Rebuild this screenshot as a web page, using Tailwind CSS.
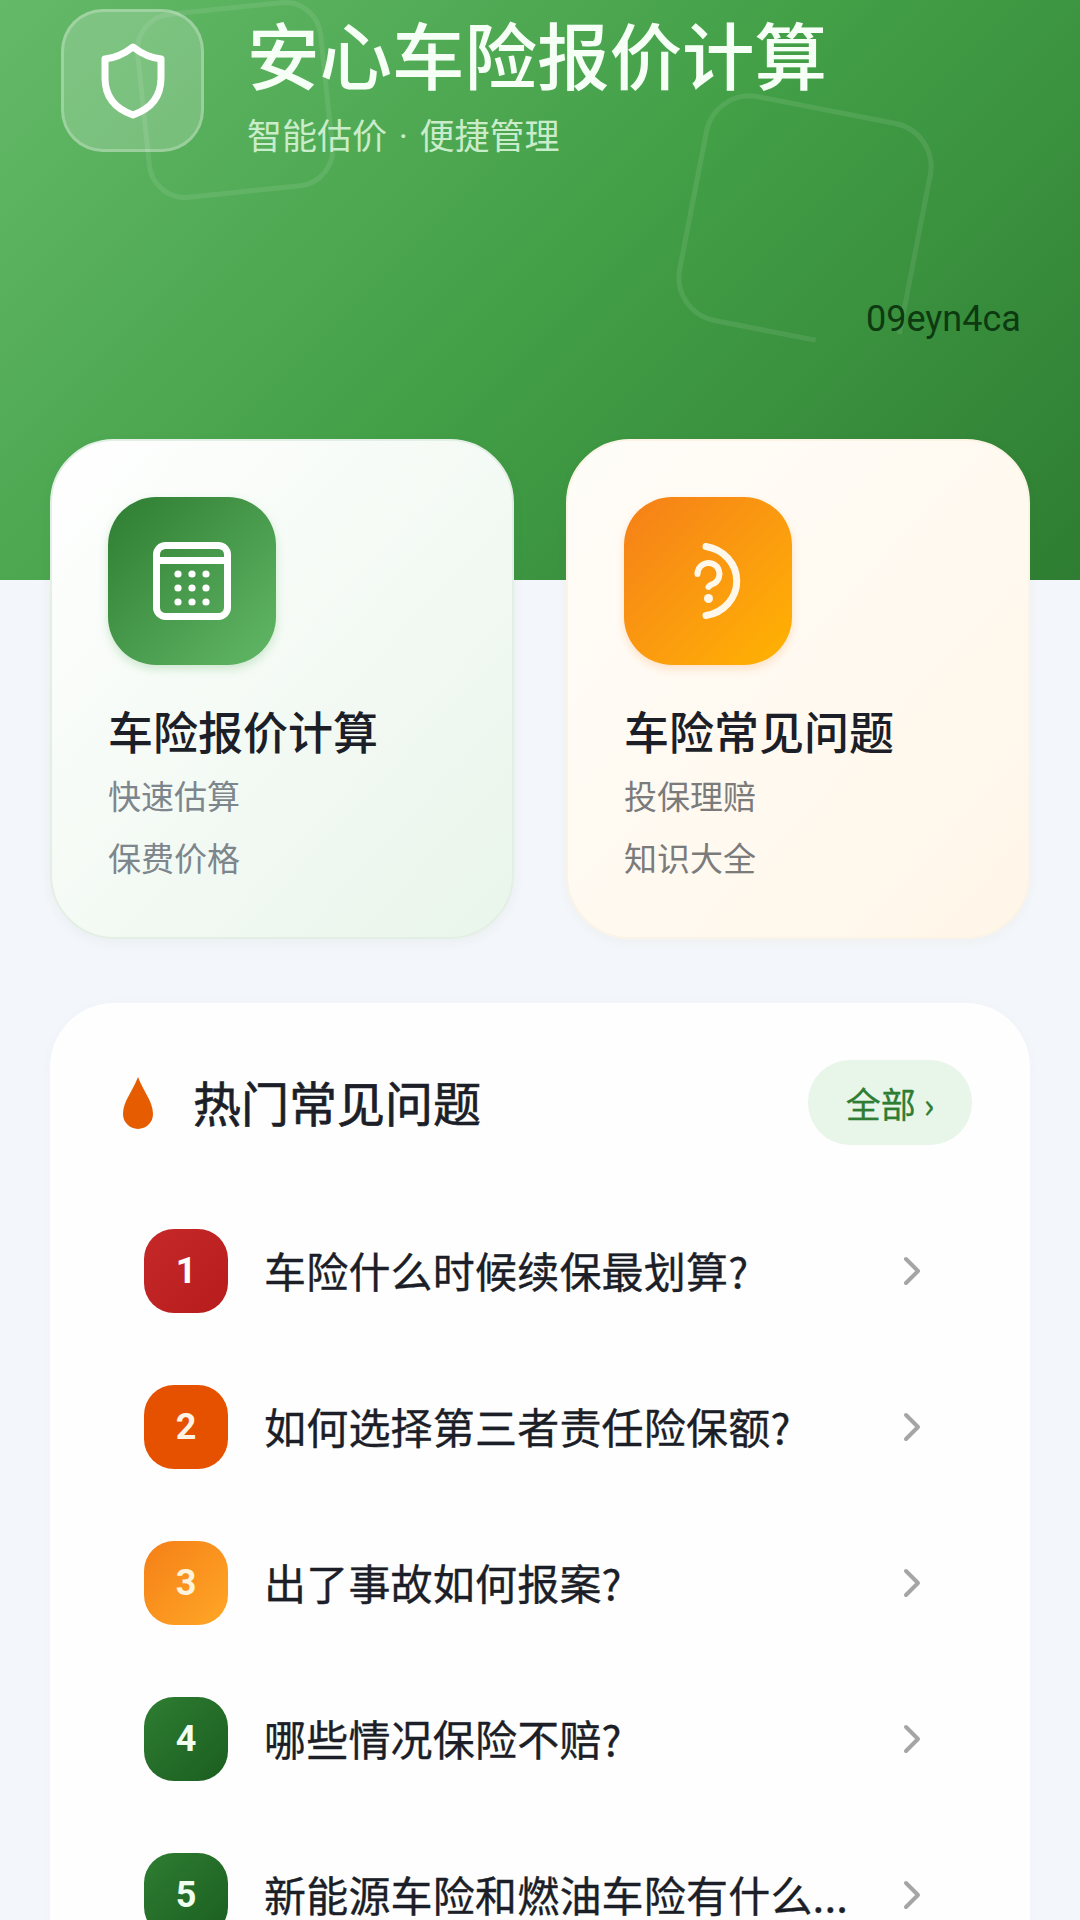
<!DOCTYPE html>
<html lang="zh-CN">
<head>
<meta charset="utf-8">
<script src="https://cdn.jsdelivr.net/npm/@tailwindcss/browser@4"></script>
</head>
<body class="m-0">
<div class="relative w-[1080px] h-[1920px] overflow-hidden bg-[#f3f6fa] font-['Noto_Sans_CJK_SC',sans-serif]">
  <header class="relative h-[580px] bg-[linear-gradient(135deg,#64b968_0%,#43a047_50%,#2e7d32_100%)]">
    <svg class="absolute inset-0 w-[1080px] h-[580px]" viewBox="0 0 1080 580" fill="none" stroke="#ffffff" stroke-opacity="0.09" stroke-width="5">
      <g transform="translate(805 222) rotate(11)"><path d="M33 114H-70A44 44 0 0 1-114 70V-70A44 44 0 0 1-70-114H70A44 44 0 0 1 114-70V92"/></g>
      <g transform="translate(235 100) rotate(-6)"><rect x="-92" y="-92" width="184" height="184" rx="36"/></g>
    </svg>
    <div class="relative flex items-start pl-[61px] pt-[9px] gap-[43px]">
      <div class="w-[143px] h-[143px] shrink-0 rounded-[42px] border-[3px] border-white/25 bg-white/20 flex items-center justify-center">
        <svg class="w-[70px] h-[82px]" viewBox="0 0 70 82" fill="none" stroke="#ffffff" stroke-width="7" stroke-linejoin="round"><path d="M35 7C44 14 53 18 63 19V38C63 57 52 69 35 75C18 69 7 57 7 38V19C17 18 26 14 35 7Z"/></svg>
      </div>
      <div class="flex flex-col">
        <h1 class="text-[72.5px] leading-[96px] -mt-[4px] font-medium text-[#f6fff6] whitespace-nowrap">安心车险报价计算</h1>
        <p class="text-[35px] leading-[48px] mt-[9px] text-[#c9ecca] whitespace-nowrap">智能估价<span class="font-['Roboto',sans-serif] whitespace-pre px-[3px]"> · </span>便捷管理</p>
      </div>
    </div>
    <span class="absolute left-[866px] top-[297px] text-[36px] leading-[44px] text-[#0d3a10] font-['Roboto',sans-serif]">09eyn4ca</span>
  </header>

  <div class="relative grid grid-cols-2 gap-[52px] mx-[50px] -mt-[141px]">
    <section class="h-[500px] rounded-[64px] border-2 border-[#e3efe4] bg-gradient-to-br from-[#ffffff] to-[#e9f5ea] pl-[56px] pt-[56px] shadow-[0_3px_12px_rgba(60,90,70,0.05)]">
      <div class="w-[168px] h-[168px] rounded-[48px] bg-gradient-to-br from-[#2e7d32] to-[#62b866] flex items-center justify-center shadow-[0_4px_10px_rgba(76,175,80,0.25)]">
        <svg class="w-[78px] h-[78px]" viewBox="0 0 78 78" fill="none">
          <rect x="3.5" y="3.5" width="71" height="71" rx="9" stroke="#ffffff" stroke-width="7"/>
          <path d="M4 18.5H74" stroke="#ffffff" stroke-width="7"/>
          <g fill="#ffffff"><circle cx="25" cy="32" r="3.600"/><circle cx="39" cy="32" r="3.600"/><circle cx="53" cy="32" r="3.600"/><circle cx="25" cy="46" r="3.600"/><circle cx="39" cy="46" r="3.600"/><circle cx="53" cy="46" r="3.600"/><circle cx="25" cy="60" r="3.600"/><circle cx="39" cy="60" r="3.600"/><circle cx="53" cy="60" r="3.600"/></g>
        </svg>
      </div>
      <h2 class="mt-[36px] text-[45px] leading-[60px] font-medium text-[#1c1f28]">车险报价计算</h2>
      <p class="mt-[3px] text-[33px] leading-[62px] text-[#7d868c]">快速估算</p>
      <p class="text-[33px] leading-[62px] text-[#7d868c]">保费价格</p>
    </section>
    <section class="h-[500px] rounded-[64px] border-2 border-[#fbf3e5] bg-gradient-to-br from-[#fffdf9] to-[#fff6e8] pl-[56px] pt-[56px] shadow-[0_3px_12px_rgba(120,90,40,0.04)]">
      <div class="w-[168px] h-[168px] rounded-[48px] bg-gradient-to-br from-[#f57f17] to-[#ffb300] flex items-center justify-center shadow-[0_4px_10px_rgba(245,127,23,0.2)]">
        <svg class="w-[168px] h-[168px]" viewBox="0 0 168 168" fill="none" stroke="#fff8ea" stroke-linecap="round">
          <path d="M82 49.500A37 35 0 0 1 82 118.500" stroke-width="7"/>
          <path d="M73.500 77A11 11 0 1 1 90 86.500Q85 88.500 84.500 90" stroke-width="6"/>
          <circle cx="84.500" cy="101.500" r="4.500" fill="#fff8ea" stroke="none"/>
        </svg>
      </div>
      <h2 class="mt-[36px] text-[45px] leading-[60px] font-medium text-[#1c1f28]">车险常见问题</h2>
      <p class="mt-[3px] text-[33px] leading-[62px] text-[#7b7b7b]">投保理赔</p>
      <p class="text-[33px] leading-[62px] text-[#7b7b7b]">知识大全</p>
    </section>
  </div>

  <section class="mt-[64px] mx-[50px] h-[1000px] rounded-t-[64px] bg-[#fefefe] shadow-[0_2px_12px_rgba(80,100,130,0.03)] pt-[57px]">
    <div class="flex items-center justify-between pl-[73px] pr-[58px] h-[85px]">
      <div class="flex items-center gap-[40px]">
        <svg class="w-[30px] h-[52px]" viewBox="0 0 30 52"><path fill="#e65c00" d="M15 0C20 14 30 24 30 37A15 15 0 0 1 0 37C0 24 10 14 15 0Z"/></svg>
        <h2 class="text-[48px] leading-[60px] pb-[4px] text-[#1c1f28] [-webkit-text-stroke:0.7px_#1c1f28]">热门常见问题</h2>
      </div>
      <button class="w-[164px] h-[85px] rounded-[42px] bg-[#e8f5e9] text-[35px] leading-[48px] text-[#2e7d32] [-webkit-text-stroke:0.3px_#2e7d32] flex items-center justify-center gap-[8px]"><span>全部</span><span>›</span></button>
    </div>
    <ul class="mt-[84px] flex flex-col gap-[72px] pl-[94px] pr-[109px]">
      <li class="flex items-center h-[84px] gap-[36px]">
        <span class="w-[84px] h-[84px] shrink-0 rounded-[30px] bg-gradient-to-br from-[#c62828] to-[#b71c1c] text-white text-[36px] leading-none font-bold font-['Roboto',sans-serif] flex items-center justify-center">1</span>
        <span class="flex-1 text-[42px] tracking-[0.2px] leading-[48px] pb-[2px] text-[#1c1f28] [-webkit-text-stroke:0.35px_#1c1f28] whitespace-nowrap">车险什么时候续保最划算?</span>
        <svg class="w-[18px] h-[30px]" viewBox="0 0 18 30" fill="none" stroke="#a5a5a5" stroke-width="4" stroke-linecap="round" stroke-linejoin="round"><path d="M3 3L15 15L3 27"/></svg>
      </li>
      <li class="flex items-center h-[84px] gap-[36px]">
        <span class="w-[84px] h-[84px] shrink-0 rounded-[30px] bg-gradient-to-br from-[#e65100] to-[#e65100] text-[#fff3e6] text-[36px] leading-none font-bold font-['Roboto',sans-serif] flex items-center justify-center">2</span>
        <span class="flex-1 text-[42px] tracking-[0.2px] leading-[48px] pb-[2px] text-[#1c1f28] [-webkit-text-stroke:0.35px_#1c1f28] whitespace-nowrap">如何选择第三者责任险保额?</span>
        <svg class="w-[18px] h-[30px]" viewBox="0 0 18 30" fill="none" stroke="#a5a5a5" stroke-width="4" stroke-linecap="round" stroke-linejoin="round"><path d="M3 3L15 15L3 27"/></svg>
      </li>
      <li class="flex items-center h-[84px] gap-[36px]">
        <span class="w-[84px] h-[84px] shrink-0 rounded-[30px] bg-gradient-to-br from-[#f57f17] to-[#ffa726] text-[#fff3dc] text-[36px] leading-none font-bold font-['Roboto',sans-serif] flex items-center justify-center">3</span>
        <span class="flex-1 text-[42px] tracking-[0.2px] leading-[48px] pb-[2px] text-[#1c1f28] [-webkit-text-stroke:0.35px_#1c1f28] whitespace-nowrap">出了事故如何报案?</span>
        <svg class="w-[18px] h-[30px]" viewBox="0 0 18 30" fill="none" stroke="#a5a5a5" stroke-width="4" stroke-linecap="round" stroke-linejoin="round"><path d="M3 3L15 15L3 27"/></svg>
      </li>
      <li class="flex items-center h-[84px] gap-[36px]">
        <span class="w-[84px] h-[84px] shrink-0 rounded-[30px] bg-gradient-to-br from-[#2e7d32] to-[#1b5e20] text-[#f0fff0] text-[36px] leading-none font-bold font-['Roboto',sans-serif] flex items-center justify-center">4</span>
        <span class="flex-1 text-[42px] tracking-[0.2px] leading-[48px] pb-[2px] text-[#1c1f28] [-webkit-text-stroke:0.35px_#1c1f28] whitespace-nowrap">哪些情况保险不赔?</span>
        <svg class="w-[18px] h-[30px]" viewBox="0 0 18 30" fill="none" stroke="#a5a5a5" stroke-width="4" stroke-linecap="round" stroke-linejoin="round"><path d="M3 3L15 15L3 27"/></svg>
      </li>
      <li class="flex items-center h-[84px] gap-[36px]">
        <span class="w-[84px] h-[84px] shrink-0 rounded-[30px] bg-gradient-to-br from-[#2e7d32] to-[#1b5e20] text-[#f0fff0] text-[36px] leading-none font-bold font-['Roboto',sans-serif] flex items-center justify-center">5</span>
        <span class="flex-1 text-[42px] tracking-[0.2px] leading-[48px] pb-[2px] text-[#1c1f28] [-webkit-text-stroke:0.35px_#1c1f28] whitespace-nowrap">新能源车险和燃油车险有什么...</span>
        <svg class="w-[18px] h-[30px]" viewBox="0 0 18 30" fill="none" stroke="#a5a5a5" stroke-width="4" stroke-linecap="round" stroke-linejoin="round"><path d="M3 3L15 15L3 27"/></svg>
      </li>
    </ul>
  </section>
</div>
</body>
</html>
